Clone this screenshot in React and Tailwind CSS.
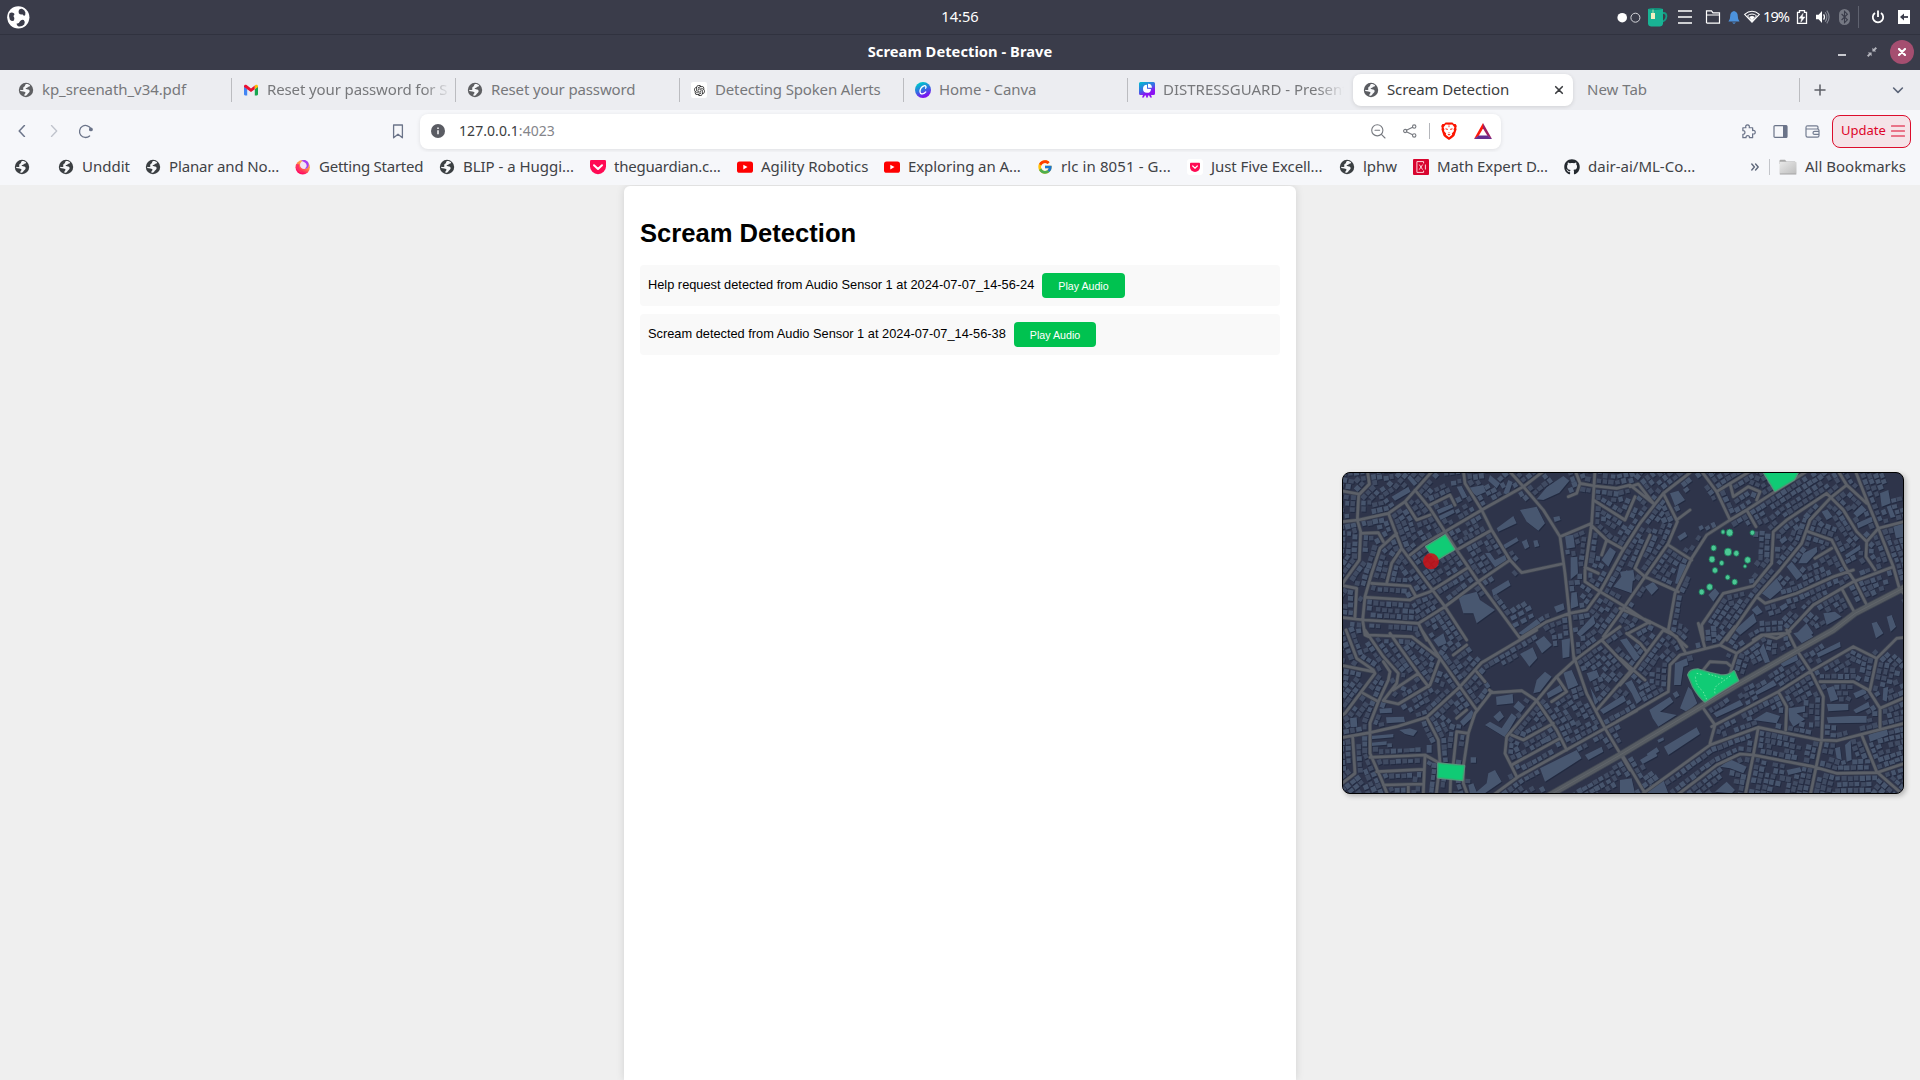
import React from "react";
import { FcGoogle } from "react-icons/fc";
import { FaGithub } from "react-icons/fa";
import { RiOpenaiFill } from "react-icons/ri";

/* ---------- icons ---------- */

const Globe = ({ color = "#3b3f42" }) => (
  <svg className="size-4 shrink-0" viewBox="0 0 16 16">
    <circle cx="8" cy="8" r="7.2" fill={color} />
    <path d="M7.6 2.2 C9.2 1.8 11 2.4 12.1 3.5 C11.9 4.6 10.9 4.9 10 4.8 C9.6 5.9 8.6 6 7.7 6.1 C7.6 7.2 8.6 7.4 10 7.5 C11.6 7.7 12 8.9 11.4 9.9 C10.6 11.2 10 11.2 9.3 12.4 C8.7 13.4 7.6 13.9 6.4 13.7 L6.4 12.4 C7.2 11.6 7.9 10.9 7.3 10.2 C6.2 9.2 4.6 9.6 2.2 9 L2.2 7.8 C3.5 8.1 4.7 8.1 5.4 7.4 C5 6.2 5.2 5 6.4 4.6 C7.1 4.2 7 3 7.6 2.2 Z" fill="#f6f7f9" />
  </svg>
);

const Gmail = () => (
  <svg className="size-4 shrink-0" viewBox="0 0 16 16">
    <path d="M1 4.5 L4.2 7 V13.4 H2.1 A1.1 1.1 0 0 1 1 12.3Z" fill="#4285f4" />
    <path d="M15 4.5 L11.8 7 V13.4 H13.9 A1.1 1.1 0 0 0 15 12.3Z" fill="#18a650" />
    <path d="M1 4.3 C1 2.8 2.5 2.4 3.6 3.1 L8 6.4 L11.8 3.5 V7.3 L8 10.1 L1 5Z" fill="#ea1033" />
    <path d="M11.8 3.5 L12.4 3.1 C13.5 2.3 15 2.8 15 4.3 V5 L11.8 7.3Z" fill="#fbbc04" />
  </svg>
);

const OpenAI = () => (
  <span className="flex size-4 shrink-0 items-center justify-center rounded-[2px] bg-white">
    <RiOpenaiFill className="size-[13px] text-[#222]" />
  </span>
);

const Canva = () => (
  <svg className="size-4 shrink-0" viewBox="0 0 16 16">
    <defs>
      <linearGradient id="canva" x1="0.2" y1="0" x2="0.6" y2="1">
        <stop offset="0.1" stopColor="#00c4cc" />
        <stop offset="0.5" stopColor="#2f74e0" />
        <stop offset="0.9" stopColor="#7a14f0" />
      </linearGradient>
    </defs>
    <circle cx="8" cy="8" r="8" fill="url(#canva)" />
    <path d="M10.6 6.2 C11.6 4.8 10.8 3.4 9 3.8 C6.6 4.3 4.7 7.5 5 10 C5.3 12.7 8.6 12.6 10.8 9.9" fill="none" stroke="#fff" strokeWidth="1.3" strokeLinecap="round" />
  </svg>
);

const Presentation = () => (
  <svg className="size-4 shrink-0" viewBox="0 0 16 16">
    <defs>
      <linearGradient id="pres" x1="0" y1="0" x2="0.5" y2="1">
        <stop offset="0" stopColor="#00c4cc" />
        <stop offset="0.5" stopColor="#3b6be6" />
        <stop offset="0.8" stopColor="#8b12f2" />
      </linearGradient>
    </defs>
    <path d="M1.5 0 H14.5 Q16 0 16 1.5 V11.5 Q16 13 14.5 13 H12 L13 15.6 H11.2 L10.2 13.4 H8.9 V15.6 H7.1 V13.4 H5.8 L4.8 15.6 H3 L4 13 H1.5 Q0 13 0 11.5 V1.5 Q0 0 1.5 0Z" fill="url(#pres)" />
    <path d="M8 2.8 A4 4 0 1 0 12 6.9 L8 6.8Z" fill="#fff" />
    <path d="M9 1.8 A4 4 0 0 1 12.9 5.8 L9 5.8Z" fill="#fff" />
  </svg>
);

const Firefox = () => (
  <svg className="size-4 shrink-0" viewBox="0 0 16 16">
    <defs>
      <linearGradient id="ff" x1="0.8" y1="0" x2="0.3" y2="1">
        <stop offset="0" stopColor="#ffd24a" />
        <stop offset="0.45" stopColor="#ff8a4c" />
        <stop offset="0.85" stopColor="#ff1060" />
      </linearGradient>
    </defs>
    <circle cx="7.7" cy="8.3" r="7.2" fill="url(#ff)" />
    <circle cx="9.2" cy="5.9" r="4.2" fill="#f2e4f6" />
    <path d="M6 1.8 C9.5 -0.2 14.8 2.2 13.6 7 C12.8 9.6 10.6 10 9.6 9.6 C12.4 8.6 12.5 4.4 9 2.9 C8 2.4 7 2.2 6 1.8Z" fill="#a93df2" />
    <path d="M1.4 5 C0.2 11 5 14.6 8.4 13.4 C5 12.6 3.4 8.8 4.4 5.5 Z" fill="#ff2f66" />
  </svg>
);

const Pocket = () => (
  <svg className="size-4 shrink-0" viewBox="0 0 16 16">
    <path d="M1.3 1 H14.7 Q16 1 16 2.3 V7.2 A8 8 0 0 1 0 7.2 V2.3 Q0 1 1.3 1Z" fill="#ff0a54" />
    <path d="M4 6.2 L8 9.9 L12 6.2" fill="none" stroke="#fff" strokeWidth="2" strokeLinecap="round" strokeLinejoin="round" />
  </svg>
);

const PocketSmall = () => (
  <svg className="size-4 shrink-0" viewBox="0 0 16 16">
    <rect width="16" height="16" rx="3" fill="#fff" />
    <path d="M3.8 3.8 H12.2 Q13 3.8 13 4.6 V8 A5 5 0 0 1 3 8 V4.6 Q3 3.8 3.8 3.8Z" fill="#ff0a54" />
    <path d="M5.7 7 L8 9.1 L10.3 7" fill="none" stroke="#fff" strokeWidth="1.2" strokeLinecap="round" />
  </svg>
);

const Youtube = () => (
  <svg className="size-4 shrink-0" viewBox="0 0 16 16">
    <rect y="2.4" width="16" height="11.4" rx="2.6" fill="#fe0000" />
    <path d="M6.3 5.8 L10.5 8.1 L6.3 10.4Z" fill="#fff" />
  </svg>
);

const MathIcon = () => (
  <svg className="size-4 shrink-0" viewBox="0 0 16 16">
    <rect width="16" height="16" rx="1" fill="#d8052f" />
    <path d="M10.6 4.4 V2.6 H3.9 V13.4 H10.6 V11.6 M6.3 5.6 L9.6 10.6 M9.6 5.6 L6.3 10.6 M12.4 5.5 V10.5" fill="none" stroke="#ffd5dc" strokeWidth="1" />
  </svg>
);

const Folder = () => (
  <svg className="h-4 w-[18px] shrink-0" viewBox="0 0 18 16">
    <defs>
      <linearGradient id="fold" x1="0" y1="0" x2="1" y2="1">
        <stop offset="0" stopColor="#e9e9e9" />
        <stop offset="1" stopColor="#bdbdbd" />
      </linearGradient>
    </defs>
    <path d="M0.5 2 Q0.5 0.8 1.6 0.8 H6 L7.5 2.4 H16 V5 H0.5Z" fill="#a9a9a9" />
    <rect x="0.5" y="2.8" width="17" height="12.2" rx="1" fill="url(#fold)" />
    <path d="M0.8 15 H17.3" stroke="#a4a4a4" />
  </svg>
);

const Line = ({ className, d, w = 1.2, vb = "0 0 16 16", children }) => (
  <svg className={className} viewBox={vb} fill="none" stroke="currentColor" strokeWidth={w} strokeLinecap="round" strokeLinejoin="round">
    <path d={d} />
    {children}
  </svg>
);

/* ---------- desktop panel ---------- */

const Tray = () => (
  <div className="flex h-[34px] items-center">
    <svg className="h-[34px] w-[310px]" viewBox="1610 0 310 34">
      <circle cx="1622.2" cy="17.7" r="4.8" fill="#fff" />
      <circle cx="1635.4" cy="17.7" r="4.5" fill="none" stroke="#d7d8dc" strokeWidth="1" />
      <path d="M1662 13 H1664 Q1666.6 13.5 1666.4 16.5 Q1666 20.5 1661.5 22.2" fill="none" stroke="#159a83" strokeWidth="1.8" />
      <path d="M1648 9 Q1655.5 7.2 1663 9 V24 Q1662.6 26.4 1660 26.6 H1651 Q1648.2 26.4 1648 24Z" fill="#19b394" />
      <path d="M1648 9 Q1655.5 7.4 1663 9 Q1655.5 10.4 1648 9Z" fill="#0e7f6c" />
      <rect x="1651" y="13" width="4" height="6" fill="#f3efc0" />
      <path d="M1653 9.5 V13" stroke="#f3efc0" strokeWidth=".7" />
      <path d="M1678 11 H1692 M1678 17 H1692 M1678 23 H1692" stroke="#fff" strokeWidth="1.6" />
      <path d="M1706.5 23 V10.8 H1711.5 L1713 12.8 H1719.5 V23.2 H1706.5 M1706.5 15 H1719.5" fill="none" stroke="#fff" strokeWidth="1.2" />
      <path d="M1734 11 Q1737.8 12 1737.8 16.2 Q1737.8 19.6 1739.6 21.6 H1728.4 Q1730.2 19.6 1730.2 16.2 Q1730.2 12 1734 11Z" fill="#4c92dc" />
      <path d="M1732 22.4 H1736 L1734 24Z" fill="#4c92dc" />
      <path d="M1744.6 14.4 Q1752 8.2 1759.4 14.4 L1752 22.2Z" fill="none" stroke="#fff" strokeWidth="1.1" />
      <path d="M1747.4 15.8 Q1752 12.2 1756.6 15.8 L1752 21Z" fill="none" stroke="#fff" strokeWidth="1" />
      <path d="M1749.3 17 Q1752 15 1754.7 17 L1752 20.8Z" fill="#fff" />
      <text x="1763" y="22" className="text-[14.67px]" textLength="27" fill="#fff" fontFamily="Noto Sans">19%</text>
      <path d="M1799.5 10.6 H1804.5 V12.4 H1806.5 V23.4 H1797.5 V12.4 H1799.5Z" fill="none" stroke="#fff" strokeWidth="1.3" />
      <path d="M1803 13.4 L1799.2 18.2 H1801.6 L1800.8 22.2 L1805 17 H1802.4Z" fill="#fff" stroke="#fff" strokeWidth=".5" />
      <path d="M1816 14.8 H1818.6 L1822 11 V23 L1818.6 19.2 H1816Z" fill="#fff" />
      <path d="M1823.6 14.4 Q1825.4 17 1823.6 19.6" fill="none" stroke="#fff" strokeWidth="1.2" />
      <path d="M1825.2 12.3 Q1828.6 17 1825.2 21.7 M1826.8 10.6 Q1831.4 17 1826.8 23.4" fill="none" stroke="#868994" strokeWidth="1.1" />
      <rect x="1839" y="9" width="11" height="16" rx="5.5" fill="#757883" />
      <path d="M1841.6 14 L1847.4 19.8 L1844.5 22.6 V11.4 L1847.4 14.2 L1841.6 20" fill="none" stroke="#3a3c4a" strokeWidth="1.1" />
      <path d="M1858.5 6 V28" stroke="#5f626f" />
      <path d="M1875 12.9 A5.2 5.2 0 1 0 1881 12.9" fill="none" stroke="#fff" strokeWidth="1.8" />
      <path d="M1878 10.4 V17" stroke="#fff" strokeWidth="1.8" />
      <rect x="1898" y="10" width="12" height="14" fill="#fff" />
      <path d="M1908 17 H1902" stroke="#3a3c4a" strokeWidth="1.8" />
      <path d="M1900 17 L1904 13.6 V20.4Z" fill="#3a3c4a" />
    </svg>
  </div>
);

const TopPanel = () => (
  <header className="grid h-[35px] grid-cols-3 items-center border-b border-[#30323f] bg-[#3a3c4a]">
    <svg className="ml-[7px] size-[23px]" viewBox="0 0 23 23">
      <circle cx="11.3" cy="11.3" r="11.1" fill="#fff" />
      <path d="M2.4 7.6 Q4.6 5.4 7.2 7.6 Q8 9 6.4 10 Q8.4 12.4 7 14.6 Q4.6 15.6 2.8 13.4 Q1.4 10.4 2.4 7.6Z M11.6 5 Q12.2 2.4 15 2.8 Q17.8 4 18.4 6.6 Q18.8 9.4 17 10 L15.8 8.4 Q13 9 11.8 7.2Z M9.6 17.4 Q12 18 12.8 15.6 Q14.2 13.2 16.8 14 Q18.6 15.8 17.2 18.4 Q15 20.8 11.6 20.4 Q9.4 19.6 9.6 17.4Z" fill="#3a3c4a" />
    </svg>
    <div className="pb-[2px] text-center text-[14.67px] text-white">14:56</div>
    <div className="flex justify-end">
      <Tray />
    </div>
  </header>
);

const TitleBar = () => (
  <div className="grid h-[35px] grid-cols-3 items-center bg-[#3a3c4a]">
    <div />
    <div className="pb-1 text-center text-[14.67px] font-bold tracking-[0.05px] text-white">Scream Detection - Brave</div>
    <div className="flex items-center justify-end pr-1.5 pb-px">
      <div className="mt-[5px] mr-[21px] h-0.5 w-2 bg-[#c9cad0]" />
      <svg className="mr-[13px] size-[10px]" viewBox="0 0 10 10" fill="#b4b5bd">
        <path d="M5.4 4.6 V0.8 L6.7 2 L8.6 0 L10 1.4 L8 3.3 L9.2 4.6Z M4.6 5.4 V9.2 L3.3 8 L1.4 10 L0 8.6 L2 6.7 L0.8 5.4Z" />
      </svg>
      <div className="flex size-6 items-center justify-center rounded-full bg-[#a54e70] text-white">
        <Line className="size-2" vb="0 0 8 8" w={2.2} d="M1 1 L7 7 M7 1 L1 7" />
      </div>
    </div>
  </div>
);

/* ---------- browser chrome ---------- */

const TABS = [
  { icon: <Globe color="#5f6063" />, label: "kp_sreenath_v34.pdf", pad: "pl-[10px]", cls: "tracking-[-0.07px]" },
  { icon: <Gmail />, label: "Reset your password for S", pad: "pl-[11px]", cls: "flex-1 tracking-[-0.12px] [mask-image:linear-gradient(to_right,black_156px,transparent_184px)]" },
  { icon: <Globe color="#5f6063" />, label: "Reset your password", pad: "pl-[11px]", cls: "tracking-[-0.13px]" },
  { icon: <OpenAI />, label: "Detecting Spoken Alerts", pad: "pl-[11px]", cls: "tracking-[-0.15px]" },
  { icon: <Canva />, label: "Home - Canva", pad: "pl-[11px]", cls: "tracking-[-0.1px]" },
  { icon: <Presentation />, label: "DISTRESSGUARD - Present", pad: "pl-[11px]", cls: "flex-1 [mask-image:linear-gradient(to_right,black_154px,transparent_181px)]", last: true },
];

const TabStrip = () => (
  <div className="flex h-10 items-center bg-[#ecedf1] pl-2 text-[15px] text-[#77787b]">
    {TABS.map((t) => (
      <div key={t.label} className="flex h-6 w-56 items-center">
        <div className={`flex min-w-0 flex-1 items-center gap-2 pr-1.5 ${t.pad}`}>
          {t.icon}
          <span className={`-mt-0.5 whitespace-nowrap ${t.cls}`}>{t.label}</span>
        </div>
        <div className={t.last ? "w-px" : "h-6 w-px bg-[#bbbcc0]"} />
      </div>
    ))}
    <div className="ml-px flex h-8 w-[220px] items-center gap-2 rounded-lg bg-white pr-[9px] pl-[10px] text-[#3b3d40] shadow-[0_1px_4px_rgba(0,0,0,0.12)]">
      <Globe color="#5a5c61" />
      <span className="-mt-0.5 flex-1 tracking-[-0.14px]">Scream Detection</span>
      <Line className="size-[10px]" vb="0 0 10 10" w={1.6} d="M1.7 1.7 L8.3 8.3 M8.3 1.7 L1.7 8.3" />
    </div>
    <span className="-mt-0.5 ml-[14px] w-[212px]">New Tab</span>
    <div className="h-6 w-px bg-[#bbbcc0]" />
    <Line className="ml-[14px] size-3 text-[#5c5f66]" vb="0 0 12 12" w={1.5} d="M6 1 V11 M1 6 H11" />
    <Line className="ml-[66px] size-3 text-[#5b6478]" vb="0 0 12 12" w={1.6} d="M1.6 4 L6 8.4 L10.4 4" />
  </div>
);

const BraveLion = () => (
  <svg className="h-[18px] w-4" viewBox="0 0 16 18">
    <path d="M4.6 0.4 H11.4 L12.9 2 L14.6 1.9 L15.8 4 L15.2 6 L15.6 7.2 L13.6 13.6 Q13 15 8 17.9 Q3 15 2.4 13.6 L0.4 7.2 L0.8 6 L0.2 4 L1.4 1.9 L3.1 2Z" fill="#fb1500" />
    <path d="M8 2.8 L11.2 2.5 L13.4 5.2 L12.6 7.4 L13 9 L10.8 11.6 L11.2 12.8 L8 15.2 L4.8 12.8 L5.2 11.6 L3 9 L3.4 7.4 L2.6 5.2 L4.8 2.5Z" fill="#fff" />
    <path d="M4.4 6.2 L7 6.9 L6.8 7.8 L4.8 7.6Z M11.6 6.2 L9 6.9 L9.2 7.8 L11.2 7.6Z M6.8 10 L8 10.8 L9.2 10 L8 11.4Z M6.4 12.4 L8 11.9 L9.6 12.4 L8 13.6Z M7.4 3.6 H8.6 L8.3 5.2 H7.7Z" fill="#fb1500" />
  </svg>
);

const BatTriangle = () => (
  <svg className="h-4 w-[18px]" viewBox="0 0 18 16">
    <path d="M9 0 L18 16 L13.6 13 L9 5.4Z" fill="#9e1f63" />
    <path d="M9 0 L0 16 L4.6 13 L9 5.4Z" fill="#ff1a0a" />
    <path d="M0 16 H18 L13.6 12.6 H4.6Z" fill="#662d91" />
  </svg>
);

const Toolbar = () => (
  <div className="flex h-[42px] items-center bg-[#f6f7fa] pr-[9px] pl-4 text-[#6b7489]">
    <Line className="size-3" vb="0 0 12 12" w={1.5} d="M8.4 0.5 L3.2 6 L8.4 11.5" />
    <Line className="ml-5 size-3 text-[#bfc3cc]" vb="0 0 12 12" w={1.3} d="M3.5 0.5 L8.7 6 L3.5 11.5" />
    <Line className="ml-[18px] size-[15px]" vb="0 0 15 15" w={1.3} d="M11.6 11.9 A6 6 0 1 1 13 5">
      <circle cx="12.9" cy="5.4" r="1.3" fill="currentColor" />
    </Line>
    <Line className="ml-[299px] h-[15px] w-3" vb="0 0 12 15" w={1.3} d="M1.6 1 H10.4 V13.8 L6 10.2 L1.6 13.8Z" />
    <div className="ml-4 flex h-[35px] w-[1081px] items-center rounded-lg bg-white pr-[9px] pl-[11px] text-[14px] text-[#3b3d40] shadow-[0_1px_4px_rgba(0,0,0,0.1)]">
      <svg className="size-[14px]" viewBox="0 0 14 14">
        <circle cx="7" cy="7" r="7" fill="#5a5c63" />
        <path d="M7 6.2 V10.2 M7 3.6 V5" stroke="#e8e8ea" strokeWidth="1.7" />
      </svg>
      <div className="-mt-px ml-[14px] flex-1 tracking-[0.06px]">
        127.0.0.1<span className="text-[#84858a]">:4023</span>
      </div>
      <Line className="size-[15px] text-[#777a80]" vb="0 0 15 15" w={1.1} d="M10.4 10.4 L14 14 M4 6.3 H8.6">
        <circle cx="6.3" cy="6.3" r="5.6" />
      </Line>
      <Line className="ml-[17px] size-[14px] text-[#777a80]" vb="0 0 14 14" w={1.1} d="M3.4 6.3 L9.6 3.2 M3.4 7.7 L9.6 10.8">
        <circle cx="2.2" cy="7" r="1.6" />
        <circle cx="11.2" cy="2.6" r="1.7" />
        <circle cx="11.2" cy="11.4" r="1.7" />
      </Line>
      <div className="mr-[11px] ml-[12px] h-4 w-px bg-[#b4b6bb]" />
      <BraveLion />
      <div className="w-[17px]" />
      <BatTriangle />
    </div>
    <div className="flex-1" />
    <Line className="mr-px size-[15px]" vb="0 0 16 16" w={1.3} d="M2 4 H5.2 Q4.4 1 7 1 Q9.4 1 8.8 4 H12.4 V7 Q15.2 6.4 15.2 8.8 Q15.2 11 12.4 10.6 V14.6 H9 Q9.2 12.4 7.2 12.4 Q5.2 12.4 5.4 14.6 H2 V11 Q4.2 11 4.2 9 Q4.2 7 2 7.2Z" />
    <svg className="ml-4 size-[15px]" viewBox="0 0 15 15">
      <rect x="1" y="1.6" width="13" height="11.8" rx="1" fill="none" stroke="currentColor" strokeWidth="1.2" />
      <rect x="10" y="1.6" width="4" height="11.8" fill="currentColor" />
    </svg>
    <Line className="ml-[17px] size-[15px] text-[#737c90]" vb="0 0 15 15" w={1.2} d="M13 5 V3.4 Q13 1.8 11.4 1.8 H2.6 Q1 1.8 1 3.4 V11.6 Q1 13.2 2.6 13.2 H12.4 Q14 13.2 14 11.6 V6.6 Q14 5 12.4 5 H1.4 M14 7.4 H9.6 Q8 7.4 8 8.9 Q8 10.4 9.6 10.4 H14" />
    <div className="ml-[12px] flex h-[33px] w-[79px] items-center justify-between rounded-lg border border-[#dc0d2c] bg-[#f5e3e8] pr-[5px] pl-2 text-[13px] text-[#dd0429]">
      <span>Update</span>
      <Line className="h-3 w-[14px]" vb="0 0 14 12" w={1.1} d="M0.5 1 H13.5 M0.5 6 H13.5 M0.5 11 H13.5" />
    </div>
  </div>
);

const BOOKMARKS = [
  { w: "w-[44px]", icon: <Globe />, label: "" },
  { w: "w-[87px]", icon: <Globe />, label: "Unddit" },
  { w: "w-[150px] tracking-[-0.15px]", icon: <Globe />, label: "Planar and No..." },
  { w: "w-[144px] tracking-[-0.24px]", icon: <Firefox />, label: "Getting Started" },
  { w: "w-[151px] tracking-[-0.03px]", icon: <Globe />, label: "BLIP - a Huggi..." },
  { w: "w-[147px] tracking-[-0.22px]", icon: <Pocket />, label: "theguardian.c..." },
  { w: "w-[147px] tracking-[-0.03px]", icon: <Youtube />, label: "Agility Robotics" },
  { w: "w-[153px] tracking-[-0.08px]", icon: <Youtube />, label: "Exploring an A..." },
  { w: "w-[150px] tracking-[0.1px]", icon: <FcGoogle className="size-4 shrink-0" />, label: "rlc in 8051 - G..." },
  { w: "w-[152px] tracking-[-0.08px]", icon: <PocketSmall />, label: "Just Five Excell..." },
  { w: "w-[74px]", icon: <Globe />, label: "lphw" },
  { w: "w-[151px] tracking-[-0.1px]", icon: <MathIcon />, label: "Math Expert D..." },
  { w: "w-[187px]", icon: <FaGithub className="size-4 shrink-0 text-[#24292f]" />, label: "dair-ai/ML-Co..." },
];

const BookmarksBar = () => (
  <div className="flex h-[33px] items-center bg-[#f6f7fa] pb-1 pl-[14px] text-[15px] text-[#3f4246]">
    {BOOKMARKS.map((b, i) => (
      <div key={i} className={`flex shrink-0 items-center gap-2 whitespace-nowrap ${b.w}`}>
        {b.icon}
        {b.label && <span>{b.label}</span>}
      </div>
    ))}
    <Line className="h-2 w-2 text-[#5f687b]" vb="0 0 8 8" w={1.4} d="M0.8 1 L3.4 4 L0.8 7 M4.6 1 L7.2 4 L4.6 7" />
    <div className="mr-[9px] ml-[10px] h-4 w-px bg-[#c3c5ca]" />
    <Folder />
    <span className="ml-2">All Bookmarks</span>
  </div>
);

/* ---------- map ---------- */

// Every sheet of street data has its own origin on the map canvas.
const SHEETS = [
  {
    o: [0, 0],
    roads: [
      "112,30 118,72 86,105 82,180 92,215 88,300 45,360 20,400", "30,92 86,102", "30,186 85,180 175,160 225,125 310,30",
      "175,160 215,265 270,340 345,440 410,540", "255,90 300,145 345,215 380,270 445,365 570,535",
      "240,285 285,250 345,215 455,150 580,80 640,34", "400,30 405,70 455,150 485,210 540,300 575,338 695,312",
      "380,270 485,210", "535,30 580,80 640,150 690,230 705,340 718,460 732,600", "690,230 780,192",
      "345,440 445,365 540,300", "345,440 265,490 105,480 30,472", "265,490 290,540",
      "92,220 145,218 160,245", "200,220 150,265 125,340 105,410 98,480 105,525 115,530", "215,265 185,310 170,370",
      "125,370 240,378 258,410 300,395 410,325", "110,412 240,420 258,410", "30,375 80,385 75,470",
      "225,125 260,180 300,165", "300,135 360,105 375,135", "570,535 650,485 718,460 770,450 810,395 880,268 930,190",
      "735,30 750,70 795,78 860,85 900,75 970,130", "795,30 785,190 765,330 765,365 810,395 885,440 960,490",
      "750,70 740,100 715,110", "790,120 885,180 915,110", "885,440 820,530", "780,192 830,240 875,265", "830,240 815,285", "765,322 805,340",
    ],
    big: [
      "620,118 650,82 700,48 718,62 688,98 640,120", "570,150 620,140 645,190 625,212 590,185", "500,205 550,168 560,190 505,215",
      "465,280 480,278 495,300 525,285 530,300 495,322", "485,390 535,360 542,376 490,408", "385,410 440,395 450,420 495,450 440,490 430,460 400,460",
      "705,228 730,224 735,262 710,266", "722,292 742,290 744,340 722,358", "724,398 740,396 745,438 722,446", "740,520 790,466 796,490 750,530",
      "185,110 235,80 242,95 195,122", "565,520 620,478 632,490 580,526", "815,300 840,262 858,275 835,320", "850,380 890,330 910,345 905,400",
      "410,85 460,75 468,95 440,108", "480,45 510,70 500,85 475,62", "380,80 395,78 412,110 398,116", "520,100 535,60 548,66 535,105",
      "575,245 590,238 598,260 585,268", "610,242 622,240 628,258 614,262", "520,255 560,232 566,242 526,266", "670,172 688,168 692,180 674,186",
      "672,440 700,430 704,448 680,458", "240,45 262,70 252,78 232,54", "320,150 365,132 370,142 326,162", "326,168 370,148 374,158 332,180",
      "540,470 556,462 562,474 546,482", "562,458 578,450 584,462 568,470", "584,444 600,436 606,448 590,456", "546,492 562,484 568,496 552,504", "570,480 586,472 592,484 576,492", "594,466 608,460 612,470 598,478",
    ],
  },
  {
    o: [870, 0],
    roads: [
      "30,80 55,72 100,130", "210,38 130,100 60,190 0,285", "130,100 155,150 172,185 145,250 75,350 0,460", "245,34 290,95 330,180", "290,95 390,34",
      "145,255 215,300", "90,225 45,325 75,350 175,395", "145,510 165,400 215,295 260,225 330,180 380,150 465,95 560,34", "380,150 408,200",
      "320,540 410,410 480,330 545,250 570,180 630,115 680,75", "250,540 245,495 310,400 400,378 455,310 460,215 500,180 620,100 635,115",
      "655,34 680,75 740,130", "705,30 740,120 775,205 820,320 838,385 860,410", "635,115 670,150 710,215 740,245 775,205 860,183",
      "565,215 635,240 675,320 705,365 740,435", "410,410 435,430 530,400 640,350 700,330", "400,540 425,525 500,520 580,435 700,365 820,320",
      "740,245 738,290 765,330", "665,385 705,460", "0,445 90,485 150,515 200,560", "90,485 25,520", "170,180 210,150", "635,265 585,295", "740,435 730,450",
      "330,70 340,110 385,80 420,95 410,120",
    ],
    big: [
      "150,100 175,92 195,120 165,138", "165,370 180,310 200,315 180,375", "75,380 100,365 115,385 95,405", "605,155 622,148 638,170 620,180",
      "700,160 725,135 740,150 712,172", "535,310 550,280 590,260 592,275 560,310", "500,320 515,305 548,345 530,360", "425,400 470,355 488,385 450,418",
      "675,285 720,255 722,268 680,295", "710,190 755,170 758,185 715,205", "345,510 400,460 410,485 360,525", "530,520 560,490 580,520 545,545",
      "610,460 645,455 665,470 620,495", "780,100 805,90 812,130 785,140", "820,200 850,190 852,230 828,235", "755,490 770,485 790,520 768,535", "800,470 815,465 828,500 812,515",
      "265,405 285,385 298,400 280,425", "0,335 40,330 45,360 10,375", "172,230 195,215 202,228 180,242", "235,200 246,195 252,205 240,212",
      "478,240 495,228 502,240 486,252", "395,450 412,436 428,456 410,466", "478,440 498,428 504,440 486,452", "800,140 812,136 826,170 812,174",
    ],
  },
  {
    o: [0, 510],
    roads: [
      "48,0 80,85 130,120 135,130 45,250 30,260", "30,105 130,125", "105,0 115,15 160,80 205,130 200,160 160,212", "160,95 180,125 175,150 145,215 120,280 120,370 155,450 175,500",
      "115,15 245,20 330,85", "180,10 215,60 265,130 295,170", "275,0 330,85 300,165 205,222 160,212", "330,85 390,170 440,240",
      "30,324 120,308 200,290 290,262 390,170 455,98 620,0", "440,125 465,155", "290,262 325,330 330,400 318,500", "120,382 285,375 330,400",
      "285,375 280,490", "485,185 435,250 415,310 400,410 400,460 415,500", "478,180 485,188 575,182 620,212 680,140 735,90 815,30 870,-10",
      "620,212 530,320 525,370 560,440", "620,212 680,300 710,360", "370,400 380,305 415,310", "545,315 580,330 670,280", "490,495 565,440 825,295 920,242",
      "545,405 690,325", "732,80 770,190 825,295 900,420", "800,240 900,125", "815,30 900,120", "680,140 710,185 665,215", "68,320 75,430 30,465",
      "140,425 280,418", "160,465 280,462", "235,465 235,500", "410,240 380,265", "265,130 190,180", "100,190 145,215", "410,45 370,75", "362,448 360,500",
    ],
    big: [
      "310,30 340,10 350,40 325,50", "610,190 620,150 645,125 665,140 630,185", "700,128 725,120 745,165 715,178", "498,200 548,192 550,220 500,225",
      "465,285 480,275 515,295 545,250 560,262 525,322", "490,260 510,242 522,260 505,275", "550,230 565,212 585,230 572,248",
      "630,415 740,360 755,385 645,455", "650,190 690,165 698,182 655,205", "390,275 425,240 435,255 400,288", "810,240 880,195 888,212 820,252",
      "415,465 430,460 440,485 470,460 475,430 495,420 515,455 450,500 420,490", "765,375 815,350 820,365 775,390", "570,72 608,52 622,84 598,110 588,96",
      "616,36 642,18 666,45 636,70", "148,236 185,234 186,248 150,250", "168,262 222,260 225,276 170,280", "290,345 305,345 305,368 290,368", "695,30 720,25 718,80 698,85", "770,130 800,120 808,140 780,155", "780,170 805,215 795,225",
      "208,300 240,295 262,302 250,318 225,312", "422,382 438,382 438,398 422,398", "120,318 190,312 190,322 122,328", "122,338 170,334 170,344 124,348",
      "60,265 80,262 82,290 62,292",
    ],
  },
  {
    o: [870, 510],
    roads: [
      "-10,275 145,185 150,105 180,75 300,45 345,-10", "300,45 350,70 330,130", "350,70 430,15 470,25 510,5", "250,120 270,95 320,98 335,110",
      "20,10 60,40 80,65", "130,0 40,120 0,165", "0,85 40,120 75,150", "130,0 170,20 195,65", "235,-20 255,55",
      "500,0 530,60 570,120 610,200 605,330 570,500", "860,22 830,25 770,85 750,180", "770,85 700,50 570,125 475,185 275,290", "250,235 285,285 270,340",
      "70,490 270,345 415,292 600,330 650,332 860,278", "475,185 500,230 497,300", "415,292 400,375 375,500", "165,500 290,405 360,372 400,375 580,410 650,430 770,428 860,398",
      "10,380 75,490", "725,315 770,425 850,495", "600,155 700,155 745,180 780,235 780,295", "780,235 860,200",
    ],
    big: [
      "165,100 200,85 205,105 190,110 182,165 162,165", "15,160 35,150 65,210 50,222 35,190", "88,240 150,200 160,215 120,245 170,255 115,290 98,265",
      "180,235 205,170 215,180 232,220 200,245", "280,250 360,210 370,225 290,262", "405,185 460,150 470,165 410,195", "132,350 230,292 240,312 145,375",
      "60,390 105,362 112,378 68,402", "620,175 640,168 655,208 632,215", "620,222 685,222 685,240 625,244", "620,262 690,258 740,258 740,278 625,280",
      "700,240 745,215 750,232 708,250", "700,190 735,175 740,190 708,205", "505,235 555,228 555,245 530,250 555,268 520,290 508,270",
      "400,270 440,245 480,258 470,280", "480,100 530,75 535,90 490,110", "300,410 330,388 380,410 370,430 330,415", "645,355 660,350 665,390 650,385", "675,345 692,330 695,390 680,395",
      "745,315 800,295 805,315 750,335", "0,30 20,25 60,80 45,95", "520,10 560,0 580,20 545,40", "590,70 660,35 662,50 595,82", "285,485 320,455 345,480 335,490", "418,60 430,40 450,95 435,100", "790,175 805,170 800,215 788,210", "0,450 35,445 45,490 0,490", "90,465 130,450 145,490 80,490",
      "80,372 110,352 118,364 88,384", "375,215 390,208 392,220 380,226", "112,330 130,322 132,330 116,338", "500,420 540,412 545,425 505,435",
    ],
  },
];

const MAJOR = "1740,373 1700,395 1575,460 1510,510 1400,572 1220,675 1120,735 870,885 660,1005";

// Blocks that stay free of small houses.
const OPEN = [
  [[560, 350], [690, 325], [708, 450], [625, 475], [590, 425], [548, 450], [465, 375], [540, 312]],
  [[480, 190], [450, 140], [570, 100], [630, 150], [680, 240], [690, 305], [580, 325]],
  [[300, 50], [392, 40], [395, 60], [300, 90]],
  [[640, 120], [785, 95], [775, 185], [695, 220]],
  [[350, 450], [440, 385], [560, 540], [480, 590], [440, 590], [415, 540]],
  [[1090, 305], [1135, 235], [1205, 190], [1265, 195], [1290, 250], [1280, 320], [1262, 370], [1175, 395], [1110, 490], [1110, 560], [1040, 480]],
  [[1080, 50], [1110, 50], [1190, 175], [1110, 215], [1050, 290], [1020, 250], [1050, 180]],
  [[960, 370], [1035, 400], [1015, 505], [905, 470]],
  [[490, 620], [720, 535], [728, 595], [680, 645], [615, 710], [575, 685], [485, 685], [458, 630]],
  [[445, 765], [490, 705], [600, 705], [525, 830], [545, 945], [490, 1000], [415, 990], [410, 830]],
  [[130, 765], [165, 730], [285, 770], [200, 790]],
  [[130, 825], [280, 785], [310, 870], [200, 860]],
  [[1720, 410], [1740, 640], [1700, 590], [1560, 560], [1450, 550], [1560, 480]],
  [[1020, 620], [1170, 560], [1210, 600], [1220, 660], [1120, 730], [1025, 700]],
  [[870, 790], [1020, 700], [1110, 735], [870, 865]],
  [[880, 885], [1120, 745], [1150, 800], [1130, 860], [1000, 950]],
  [[580, 975], [820, 835], [860, 890], [680, 1000]],
  [[1480, 750], [1590, 700], [1600, 830], [1500, 800]],
];

const pts = (s, [ox, oy] = [0, 0]) =>
  s.split(" ").map((p) => {
    const [x, y] = p.split(",").map(Number);
    return [x + ox, y + oy];
  });
const toPath = (list) => "M" + list.map((p) => p.map((n) => n.toFixed(1)).join(" ")).join("L");

const inside = (x, y, poly) => {
  let hit = false;
  for (let i = 0, j = poly.length - 1; i < poly.length; j = i++) {
    const [xi, yi] = poly[i];
    const [xj, yj] = poly[j];
    if (yi > y !== yj > y && x < ((xj - xi) * (y - yi)) / (yj - yi) + xi) hit = !hit;
  }
  return hit;
};

const segDist = (x, y, [ax, ay], [bx, by]) => {
  const dx = bx - ax;
  const dy = by - ay;
  const t = Math.max(0, Math.min(1, ((x - ax) * dx + (y - ay) * dy) / (dx * dx + dy * dy || 1)));
  return Math.hypot(x - ax - t * dx, y - ay - t * dy);
};

const ROADS = SHEETS.flatMap((s) => s.roads.map((r) => pts(r, s.o)));
const BIG = SHEETS.flatMap((s) => s.big.map((r) => pts(r, s.o)));
const MAJOR_PTS = pts(MAJOR);

// Rows of small houses are laid along both sides of every street.
const buildHouses = () => {
  const segs = ROADS.flatMap((r) => r.slice(1).map((p, i) => [r[i], p, 13]));
  MAJOR_PTS.slice(1).forEach((p, i) => segs.push([MAJOR_PTS[i], p, 24]));
  const placed = [];
  let seed = 7;
  const rnd = () => (seed = (seed * 16807) % 2147483647) / 2147483647;
  let light = "";
  let dim = "";
  for (const off of [16, 34, 52, 69]) {
    for (const [a, b] of segs) {
      const len = Math.hypot(b[0] - a[0], b[1] - a[1]);
      const ux = (b[0] - a[0]) / len;
      const uy = (b[1] - a[1]) / len;
      for (const side of [-1, 1]) {
        for (let t = 3; t < len; t += 2) {
          const x = a[0] + ux * t - uy * off * side;
          const y = a[1] + uy * t + ux * off * side;
          if (x < 30 || x > 1728 || y < 30 || y > 1010) continue;
          if (placed.some((p) => Math.abs(p[0] - x) < p[2] && Math.abs(p[1] - y) < p[2] && Math.hypot(p[0] - x, p[1] - y) < p[2])) continue;
          if (segs.some((s) => segDist(x, y, s[0], s[1]) < s[2])) continue;
          if (OPEN.some((o) => inside(x, y, o))) continue;
          if (BIG.some((o) => inside(x, y, o) || o.some((p, i) => segDist(x, y, p, o[(i + 1) % o.length]) < 9))) continue;
          const r = rnd();
          placed.push([x, y, 16.4 + rnd() * 2.4]);
          if (r < 0.06) continue;
          const w = 6.4 + rnd() * 1.9;
          const h = 5.8 + rnd() * 2.2;
          const jx = (rnd() - 0.5) * 2;
          const jy = (rnd() - 0.5) * 2;
          const c = (i, j) => [x + jx + ux * w * i - uy * h * j, y + jy + uy * w * i + ux * h * j];
          const d = toPath([c(-1, -1), c(1, -1), c(1, 1), c(-1, 1)]) + "Z";
          if (r < 0.55) light += d;
          else dim += d;
        }
      }
    }
  }
  return { light, dim };
};

const HOUSES = buildHouses();
const ROAD_PATH = ROADS.map(toPath).join("");
const BIG_PATH = BIG.map((b) => toPath(b) + "Z").join("");

const TREES = [
  [309, 216, 6], [329, 218, 10], [397, 218, 7], [281, 264, 8], [324, 276, 11], [349, 280, 8], [276, 298, 9], [383, 300, 9],
  [305, 309, 7], [375, 319, 5], [285, 331, 8], [323, 352, 7], [344, 366, 8], [269, 381, 9], [245, 396, 8],
];

const PARKS =
  "M289 260 L345 226 L372 268 L318 300Z M1300 34 L1335 92 L1392 58 L1405 34Z M325 911 L402 918 L397 960 L324 952Z M1075 645 Q1080 628 1105 629 Q1140 640 1170 646 Q1195 650 1212 634 L1224 662 Q1180 688 1125 724 Q1108 712 1090 680Z";

const CityMap = () => (
  <div className="h-[322px] w-[562px] overflow-hidden rounded-lg border border-black bg-[#2e344a] shadow-[2px_2px_5px_rgba(0,0,0,0.25)]">
    <svg className="size-full" viewBox="39 39 1680 960" preserveAspectRatio="none">
      <g transform="translate(2.5 3)" fill="#222a40">
        <path d={HOUSES.light} />
        <path d={HOUSES.dim} />
        <path d={BIG_PATH} />
      </g>
      <path d={HOUSES.dim} fill="#404b62" />
      <path d={HOUSES.light} fill="#47556d" />
      <path d={BIG_PATH} fill="#485770" />
      <g fill="none" strokeLinejoin="round" strokeLinecap="round">
        <path d={ROAD_PATH} stroke="#3f4552" strokeWidth="12" />
        <path d={toPath(MAJOR_PTS)} stroke="#3f4552" strokeWidth="22" />
        <path d={ROAD_PATH} stroke="#5c6068" strokeWidth="8" />
        <path d={toPath(MAJOR_PTS)} stroke="#565b62" strokeWidth="17" />
        <path d={toPath(MAJOR_PTS)} stroke="#666b6e" strokeWidth="2" />
      </g>
      <path d={PARKS} fill="none" stroke="#5c8f7c" strokeWidth="8" strokeLinejoin="round" />
      <path d={PARKS} fill="#10cb75" stroke="#2cb574" strokeWidth="3" strokeLinejoin="round" />
      <path d="M1100 640 L1118 644 M1096 650 Q1098 680 1118 692 M1130 718 L1118 692 M1155 700 Q1150 680 1170 670 L1205 645 M1135 642 L1180 656" fill="none" stroke="#6fe6a4" strokeWidth="3" strokeDasharray="5 5" />
      {TREES.map(([x, y, r]) => (
        <ellipse key={`${x}-${y}`} cx={x + 870} cy={y} rx={r} ry={r * 1.08} fill="#4cc795" stroke="#1c7a58" strokeWidth="2.5" />
      ))}
      <circle cx="303" cy="304" r="24" fill="#c81218" fillOpacity="0.88" />
    </svg>
  </div>
);

/* ---------- page ---------- */

const ALERTS = [
  "Help request detected from Audio Sensor 1 at 2024-07-07_14-56-24",
  "Scream detected from Audio Sensor 1 at 2024-07-07_14-56-38",
];

const Page = () => (
  <main className="grid flex-1 grid-cols-[624px_672px_1fr] overflow-hidden bg-[#efefef] pt-px font-['Liberation_Sans',Arial,sans-serif]">
    <div />
    <section className="rounded-t-md bg-white px-4 pt-[33px] shadow-[0_0_8px_rgba(0,0,0,0.12)]">
      <h1 className="text-[25.6px] leading-[29px] font-bold text-black">Scream Detection</h1>
      <ul className="mt-[17px] flex flex-col gap-2">
        {ALERTS.map((a) => (
          <li key={a} className="flex h-[41px] items-center gap-2 rounded bg-[#f9f9f9] px-2 text-[12.8px] text-black">
            <span className="pb-px">{a}</span>
            <button className="h-[25px] rounded-[4px] bg-[#00c250] px-4 text-[10.67px] text-white">Play Audio</button>
          </li>
        ))}
      </ul>
    </section>
    <aside className="flex items-start justify-end pt-[286px] pr-4">
      <CityMap />
    </aside>
  </main>
);

export default function App() {
  return (
    <div className="flex h-[1080px] w-[1920px] flex-col overflow-hidden font-['Noto_Sans',sans-serif]">
      <TopPanel />
      <TitleBar />
      <TabStrip />
      <Toolbar />
      <BookmarksBar />
      <Page />
    </div>
  );
}
